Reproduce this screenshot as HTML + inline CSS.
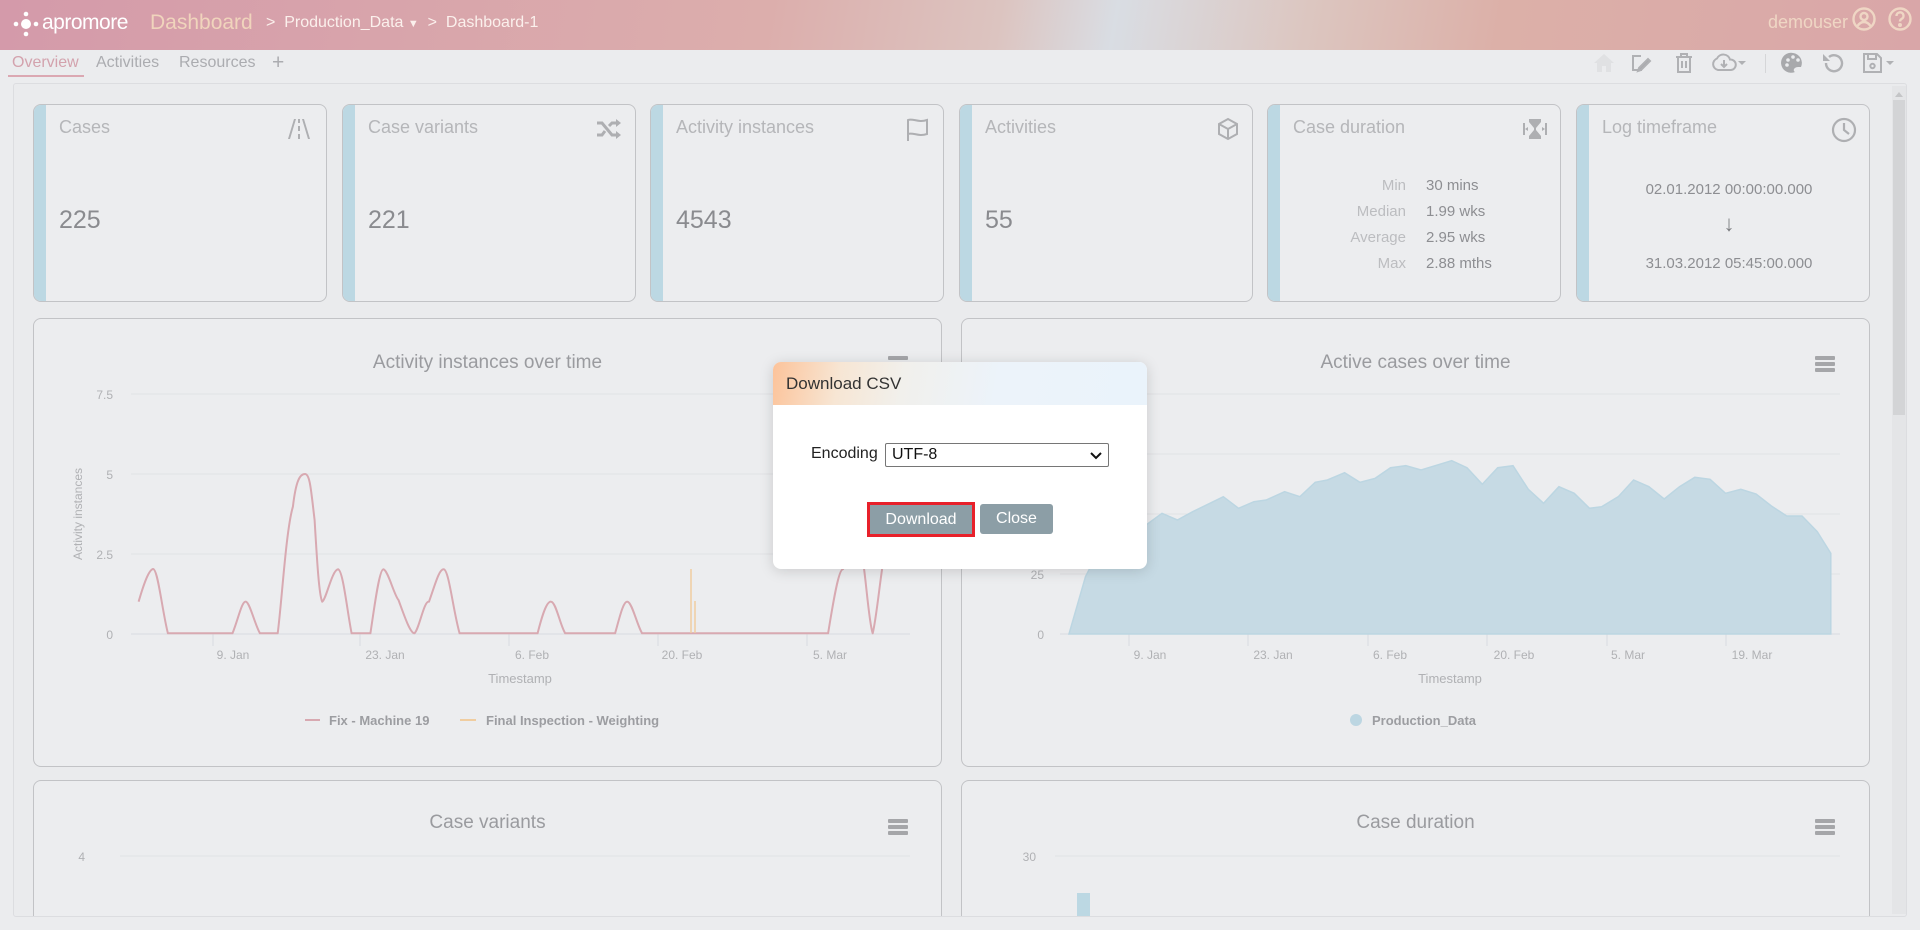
<!DOCTYPE html>
<html><head><meta charset="utf-8"><style>
*{box-sizing:border-box;margin:0;padding:0}
body{width:1920px;height:930px;overflow:hidden;background:#ebecee;font-family:"Liberation Sans",sans-serif;position:relative}
.abs{position:absolute}
.hdr{left:0;top:0;width:1920px;height:50px;background:linear-gradient(100deg,#d49aaa 0%,#dcaeac 40%,#dcc4c0 52%,#d9dde3 58%,#dcc6c0 68%,#dcb0a8 78%,#d9a6a8 100%)}
.card{top:104px;width:294px;height:198px;border:1px solid #c2c3c6;border-radius:8px;background:#ecedef;overflow:hidden}
.card .bar{position:absolute;left:0;top:0;bottom:0;width:12px;background:#bcd8e3}
.card .t{position:absolute;left:25px;top:12px;font-size:18px;color:#b5b6b9}
.card .v{position:absolute;left:25px;top:101px;font-size:25px;color:#8a8b8f}
.card svg.ic{position:absolute;right:12px;top:12px}
.chart{border:1px solid #c2c3c6;border-radius:8px;background:#ecedef;overflow:hidden}
.ct{position:absolute;width:100%;text-align:center;top:33px;font-size:19px;color:#9a9b9f}
.ham{position:absolute;width:20px;height:16px}
.ham i{display:block;height:4px;background:#a5a6a9;border-radius:1px;margin-bottom:2px}
.tab{top:54px;font-size:16px;color:#abacb0}
</style></head><body>
<div class="abs hdr"></div>
<svg class="abs" style="left:12px;top:10px" width="28" height="28" viewBox="0 0 28 28"><g fill="#fff"><circle cx="14" cy="14" r="5"/><circle cx="14" cy="4" r="2.3"/><circle cx="14" cy="24" r="2.3"/><circle cx="4" cy="14" r="2.3"/><circle cx="24" cy="14" r="2.3"/></g></svg>
<div class="abs" style="left:42px;top:11px;font-size:21px;color:#fff;letter-spacing:-0.5px">apromore</div>
<div class="abs" style="left:150px;top:11px;font-size:21px;color:#f0d4bc">Dashboard</div>
<div class="abs" style="left:266px;top:14px;font-size:16px;color:#fbf0ec">&gt;&nbsp; Production_Data <span style="font-size:11px">&#9660;</span> &nbsp;&gt;&nbsp; Dashboard-1</div>
<div class="abs" style="left:1768px;top:12px;font-size:18px;color:#efd6c4">demouser</div>
<svg class="abs" style="left:1851px;top:6px" width="26" height="26" viewBox="0 0 26 26" fill="none" stroke="#efd6c4" stroke-width="2.4"><circle cx="13" cy="13" r="10.5"/><circle cx="13" cy="10.5" r="3.5"/><path d="M6.5 20c2-3 4-4 6.5-4s4.5 1 6.5 4"/></svg>
<svg class="abs" style="left:1887px;top:6px" width="26" height="26" viewBox="0 0 26 26" fill="none" stroke="#efd6c4" stroke-width="2.4"><circle cx="13" cy="13" r="10.5"/><path d="M9.5 10a3.5 3.5 0 1 1 5 3c-1.2.7-1.5 1.3-1.5 2.5"/><circle cx="13" cy="19" r="0.8" fill="#efd6c4"/></svg>

<div class="abs tab" style="left:12px;color:#d3a2ad">Overview</div>
<div class="abs" style="left:8px;top:75px;width:76px;height:2px;background:#dba8b2"></div>
<div class="abs tab" style="left:96px">Activities</div>
<div class="abs tab" style="left:179px">Resources</div>
<div class="abs tab" style="left:272px;font-size:21px;top:51px">+</div>

<svg class="abs" style="left:1592px;top:50px" width="320" height="26" viewBox="0 0 320 26">
<path d="M2 13 L12 4 L22 13 H19 V22 H14 V16 H10 V22 H5 V13Z" fill="#e0e1e3"/>
<g fill="none" stroke="#b0b1b4" stroke-width="2">
<path d="M49 6 H41 V20 H50"/><path d="M47 18 L56 9 L58 11 L49 20 L46 21Z" fill="#a8a9ac"/>
<path d="M84 7 H100 M89 7 V4 H95 V7 M86 7 V22 H98 V7 M90 11 V18 M94 11 V18"/>
<path d="M126 20 a6 6 0 0 1 -1 -11.5 a7 7 0 0 1 13 1 a5 5 0 0 1 1 10.5Z"/><path d="M132 10 V17 M129 14 L132 17 L135 14"/>
</g>
<path d="M146 11 L154 11 L150 15Z" fill="#b0b1b4"/>
<rect x="173" y="4" width="1" height="19" fill="#d5d6d8"/>
<path d="M201 3 a10 10 0 1 0 2 19 c-3-2 0-5 3-5 h3 a10 10 0 0 0 -8 -14Z" fill="#a8a9ac"/>
<g fill="#ebecee"><circle cx="196" cy="10" r="1.8"/><circle cx="201" cy="7" r="1.8"/><circle cx="206" cy="10" r="1.8"/><circle cx="195" cy="15" r="1.8"/></g>
<path d="M237 7 a8 8 0 1 1 -3 6" fill="none" stroke="#b0b1b4" stroke-width="2.4"/><path d="M231 4 V11 H238Z" fill="#b0b1b4"/>
<g fill="none" stroke="#b0b1b4" stroke-width="2"><path d="M272 4 H285 L289 8 V22 H272Z"/><path d="M276 4 V9 H284 V4"/><circle cx="280.5" cy="16" r="2.2"/></g>
<path d="M294 11 L302 11 L298 15Z" fill="#b0b1b4"/>
</svg>

<!-- main container -->
<div class="abs" style="left:13px;top:83px;width:1894px;height:834px;border:1px solid #dcdde0;background:#eaebed;border-radius:3px;overflow:hidden">
<div class="abs chart" style="left:19px;top:696px;width:909px;height:160px"><div class="ct" style="top:31px">Case variants</div>
<div class="ham" style="left:854px;top:38px"><i></i><i></i><i></i></div></div>
<div class="abs chart" style="left:947px;top:696px;width:909px;height:160px"><div class="ct" style="top:31px">Case duration</div>
<div class="ham" style="left:853px;top:38px"><i></i><i></i><i></i></div></div>
</div>
<div class="abs" style="left:1892px;top:86px;width:14px;height:828px;background:#e4e5e7"></div>
<div class="abs" style="left:1893px;top:100px;width:12px;height:315px;background:#d3d4d6"></div>
<div class="abs" style="left:1895px;top:92px;width:0;height:0;border:4px solid transparent;border-bottom:5px solid #c4c5c7;border-top:0"></div>

<div class="abs card" style="left:33px"><div class="bar"></div><div class="t">Cases</div><div class="v">225</div>
<svg class="ic" width="30" height="24" viewBox="0 0 30 24" fill="#aeafb2"><path d="M4 22 L10 2 H12 L6 22Z M18 2 H20 L26 22 H24Z M14 2 h2 v4 h-2z M14 9 h2 v5 h-2z M14 17 h2 v5 h-2z"/></svg></div>
<div class="abs card" style="left:342px"><div class="bar"></div><div class="t">Case variants</div><div class="v">221</div>
<svg class="ic" width="28" height="24" viewBox="0 0 28 24" fill="none" stroke="#aeafb2" stroke-width="3"><path d="M2 6 H7 L17 18 H23 M2 18 H7 L10 14 M14 9 L17 6 H23"/><path d="M21 2 L26 6 L21 10Z M21 14 L26 18 L21 22Z" fill="#aeafb2" stroke="none"/></svg></div>
<div class="abs card" style="left:650px"><div class="bar"></div><div class="t">Activity instances</div><div class="v">4543</div>
<svg class="ic" width="26" height="26" viewBox="0 0 26 26" fill="none" stroke="#aeafb2" stroke-width="2"><path d="M3 24 V3 C8 1 13 6 22 3 V17 C13 20 8 15 3 17"/></svg></div>
<div class="abs card" style="left:959px"><div class="bar"></div><div class="t">Activities</div><div class="v">55</div>
<svg class="ic" width="24" height="24" viewBox="0 0 24 24" fill="none" stroke="#aeafb2" stroke-width="2"><path d="M12 2 L21 7 V17 L12 22 L3 17 V7Z M3 7 L12 12 L21 7 M12 12 V22"/></svg></div>
<div class="abs card" style="left:1267px"><div class="bar"></div><div class="t">Case duration</div>
<svg class="ic" width="26" height="24" viewBox="0 0 26 24" fill="#aeafb2"><path d="M7 2 H19 V5 L14 11 V13 L19 19 V22 H7 V19 L12 13 V11 L7 5Z"/><path d="M1 6 V18 H3 V6Z M23 6 V18 H25 V6Z M3 12 L6 10 V14Z M23 12 L20 10 V14Z"/></svg>
<div style="position:absolute;left:0;width:138px;text-align:right;font-size:15px;line-height:26px;color:#bcbdc0;top:68px">Min<br>Median<br>Average<br>Max</div>
<div style="position:absolute;left:158px;top:68px;font-size:15px;line-height:26px;color:#8d8e92">30 mins<br>1.99 wks<br>2.95 wks<br>2.88 mths</div></div>
<div class="abs card" style="left:1576px"><div class="bar"></div><div class="t">Log timeframe</div>
<svg class="ic" width="26" height="26" viewBox="0 0 26 26" fill="none" stroke="#aeafb2" stroke-width="2.2"><circle cx="13" cy="13" r="11"/><path d="M13 6 V13 L18 17"/></svg>
<div style="position:absolute;left:12px;right:0;top:75px;text-align:center;font-size:15px;color:#8d8e92;line-height:19px">02.01.2012 00:00:00.000</div>
<div style="position:absolute;left:12px;right:0;top:106px;text-align:center;font-size:22px;color:#7d7e82">&#8595;</div>
<div style="position:absolute;left:12px;right:0;top:150px;text-align:center;font-size:15px;color:#8d8e92">31.03.2012 05:45:00.000</div></div>

<div class="abs chart" style="left:33px;top:318px;width:909px;height:449px"><div class="ct">Activity instances over time</div>
<div class="ham" style="left:854px;top:37px"><i></i><i></i><i></i></div></div>
<div class="abs chart" style="left:961px;top:318px;width:909px;height:449px"><div class="ct">Active cases over time</div>
<div class="ham" style="left:853px;top:37px"><i></i><i></i><i></i></div></div>

<svg class="abs" style="left:0;top:0" width="1920" height="916">
<g stroke="#e1e2e5" stroke-width="1">
<line x1="131" y1="394" x2="910" y2="394"/><line x1="131" y1="474" x2="910" y2="474"/><line x1="131" y1="554" x2="910" y2="554"/>
<line x1="1060" y1="394" x2="1840" y2="394"/><line x1="1060" y1="454" x2="1840" y2="454"/><line x1="1060" y1="514" x2="1840" y2="514"/><line x1="1060" y1="574" x2="1840" y2="574"/>
<line x1="120" y1="856" x2="910" y2="856"/><line x1="1055" y1="856" x2="1840" y2="856"/>
</g>
<g stroke="#d8dae0"><line x1="131" y1="634" x2="910" y2="634"/><line x1="1060" y1="634" x2="1840" y2="634"/>
<line x1="213" y1="634" x2="213" y2="646"/><line x1="360" y1="634" x2="360" y2="646"/><line x1="509" y1="634" x2="509" y2="646"/><line x1="658" y1="634" x2="658" y2="646"/><line x1="807" y1="634" x2="807" y2="646"/>
<line x1="1129" y1="634" x2="1129" y2="646"/><line x1="1248" y1="634" x2="1248" y2="646"/><line x1="1368" y1="634" x2="1368" y2="646"/><line x1="1487" y1="634" x2="1487" y2="646"/><line x1="1607" y1="634" x2="1607" y2="646"/><line x1="1726" y1="634" x2="1726" y2="646"/>
</g>
<g font-family="Liberation Sans" font-size="12" fill="#b0b1b4" text-anchor="end">
<text x="113" y="399">7.5</text><text x="113" y="479">5</text><text x="113" y="559">2.5</text><text x="113" y="639">0</text>
<text x="1044" y="579">25</text><text x="1044" y="639">0</text>
<text x="85" y="861">4</text><text x="1036" y="861">30</text>
</g>
<g font-family="Liberation Sans" font-size="12" fill="#b0b1b4" text-anchor="middle">
<text x="233" y="659">9. Jan</text><text x="385" y="659">23. Jan</text><text x="532" y="659">6. Feb</text><text x="682" y="659">20. Feb</text><text x="830" y="659">5. Mar</text>
<text x="1150" y="659">9. Jan</text><text x="1273" y="659">23. Jan</text><text x="1390" y="659">6. Feb</text><text x="1514" y="659">20. Feb</text><text x="1628" y="659">5. Mar</text><text x="1752" y="659">19. Mar</text>
<text x="520" y="683" font-size="13">Timestamp</text><text x="1450" y="683" font-size="13">Timestamp</text>
<text transform="translate(82,514) rotate(-90)" font-size="12">Activity instances</text>
</g>
<polygon fill="#c6dae4" stroke="#bcd6e2" stroke-width="1.5" points="1069,634 1085.5,576.7 1100.8,546.7 1143.7,526.7 1162,513.3 1177.4,520 1192.7,511.7 1223.3,496.7 1238.6,508.3 1253.9,501.7 1266.2,500 1284.6,491.7 1299.9,496.7 1315.2,482.3 1327.4,480 1344.6,472.7 1359.9,482.3 1375.2,478.3 1390.5,467.7 1405.8,465.7 1421.1,470 1451.7,460.7 1467,467.7 1482.3,484.3 1497.7,467.7 1513,465.7 1528.3,489.3 1543.6,503.3 1558.9,486.7 1574.2,493.3 1589.5,508.3 1601.8,506.7 1618.3,496.7 1633.6,480 1648.9,486.7 1664.2,499 1679.5,486.7 1694.8,477.3 1710.1,479.3 1725.5,493.3 1740.8,489.3 1756.1,494 1771.4,506 1786.7,516 1802,516 1817.3,531.7 1830.8,553.3 1830.8,634"/>
<path fill="none" stroke="#d8a9b1" stroke-width="2" stroke-linejoin="round" d="M138.6,601.7 C142,590 148,570 153,569 C158,569 162,610 167.9,633.3 L232.5,633.3 C238,620 242,600 246,601.7 C250,603 255,625 260,633.3 L277.7,633.3 C282,600 286,530 292.9,506.7 C296,480 300,474 305,474 C310,474 311,490 314.6,520 C317,560 319,595 322.2,601.7 C326,600 332,570 338,569.3 C343,570 347,610 351.6,633.3 L370.4,633.3 C374,610 379,570 383.3,569.3 C388,570 394,595 398.5,600 C404,615 410,633 414.4,633.3 C419,630 424,600 429,601.7 C435,585 439,569 443.7,569.3 C449,570 453,610 459.6,633.3 L537.6,633.3 C541,620 546,601 551.1,601.7 C556,602 560,625 565.2,633.3 L615.1,633.3 C619,620 623,601 627.4,601.7 C632,602 637,625 642.1,633.3 L828.1,633.3 C832,610 838,570 842.8,569.3 L860,545 C865,560 868,620 872.7,633.3 C876,620 879,590 882.1,569"/>
<path stroke="#f0cda0" stroke-width="1.5" d="M691,633 V569 M695,633 V601"/>
<line x1="305" y1="720" x2="320" y2="720" stroke="#d8a9b1" stroke-width="2"/>
<line x1="460" y1="720" x2="476" y2="720" stroke="#f0cda0" stroke-width="2"/>
<circle cx="1356" cy="720" r="6" fill="#bcd6e2"/>
<g font-family="Liberation Sans" font-size="13" font-weight="bold" fill="#9c9da1">
<text x="329" y="725">Fix - Machine 19</text><text x="486" y="725">Final Inspection - Weighting</text><text x="1372" y="725">Production_Data</text>
</g>
<rect x="1077" y="893" width="13" height="30" fill="#bcd8e3"/>
</svg>

<div class="abs" style="left:773px;top:362px;width:374px;height:207px;background:#fff;border-radius:8px;overflow:hidden;box-shadow:0 2px 14px rgba(0,0,0,0.15)">
<div style="height:43px;background:linear-gradient(100deg,#fcc39a 0%,#f7e6d4 18%,#f1f0ec 35%,#ecf3fa 60%,#eaf3fb 100%)"></div>
<div style="position:absolute;left:13px;top:12px;font-size:17px;color:#333">Download CSV</div>
<div style="position:absolute;left:38px;top:83px;font-size:16px;color:#222">Encoding</div>
<div style="position:absolute;left:112px;top:81px;width:224px;height:24px;border:1px solid #767676;border-radius:2px;font-size:16px;color:#111;padding:2px 6px">UTF-8
<svg style="position:absolute;right:6px;top:8px" width="12" height="8" viewBox="0 0 12 8"><path d="M1 1 L6 6 L11 1" fill="none" stroke="#111" stroke-width="2"/></svg></div>
<div style="position:absolute;left:94px;top:140px;width:108px;height:35px;border:3px solid #e8202a;background:#8c9ea6;color:#fff;font-size:16px;text-align:center;line-height:29px">Download</div>
<div style="position:absolute;left:207px;top:142px;width:73px;height:30px;background:#8c9ea6;border-radius:3px;color:#fff;font-size:16px;text-align:center;line-height:30px">Close</div>
</div>
</body></html>
